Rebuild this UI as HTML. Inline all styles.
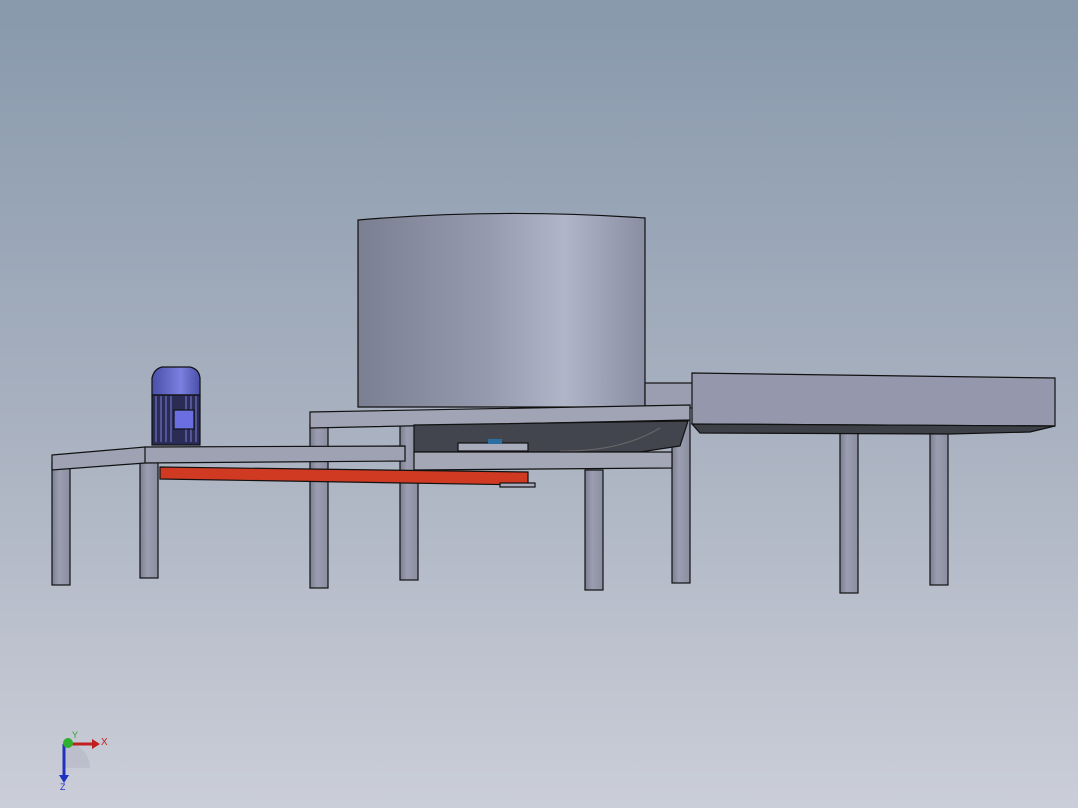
<!DOCTYPE html>
<html><head><style>html,body{margin:0;padding:0;width:1078px;height:808px;overflow:hidden}svg{display:block}</style></head>
<body>
<svg width="1078" height="808" viewBox="0 0 1078 808" xmlns="http://www.w3.org/2000/svg" font-family="Liberation Sans, sans-serif">
<defs>
<linearGradient id="bg" x1="0" y1="0" x2="0" y2="1">
<stop offset="0" stop-color="#8899ac"/><stop offset="0.5" stop-color="#a7b0bf"/><stop offset="1" stop-color="#cbced8"/></linearGradient>
<linearGradient id="cyl" x1="0" y1="0" x2="1" y2="0">
<stop offset="0" stop-color="#7b7f92"/><stop offset="0.45" stop-color="#969aae"/><stop offset="0.72" stop-color="#b0b5c8"/><stop offset="1" stop-color="#8a8ea2"/></linearGradient>
<linearGradient id="mot" x1="0" y1="0" x2="1" y2="0">
<stop offset="0" stop-color="#4a4fa8"/><stop offset="0.6" stop-color="#7a80e0"/><stop offset="1" stop-color="#4a4fa8"/></linearGradient>
<linearGradient id="leg" x1="0" y1="0" x2="1" y2="0">
<stop offset="0" stop-color="#7c8092"/><stop offset="0.4" stop-color="#9a9eb0"/><stop offset="1" stop-color="#8a8ea0"/></linearGradient>
</defs>
<rect width="1078" height="808" fill="url(#bg)"/>
<g stroke="#111" stroke-width="1.2">
<rect x="52" y="462" width="18" height="123" fill="url(#leg)"/>
<rect x="140" y="455" width="18" height="123" fill="url(#leg)"/>
<rect x="310" y="425" width="18" height="163" fill="url(#leg)"/>
<rect x="400" y="420" width="18" height="160" fill="url(#leg)"/>
<rect x="585" y="470" width="18" height="120" fill="url(#leg)"/>
<rect x="672" y="420" width="18" height="163" fill="url(#leg)"/>
<rect x="840" y="430" width="18" height="163" fill="url(#leg)"/>
<rect x="930" y="425" width="18" height="160" fill="url(#leg)"/>
<path d="M358 220 Q500 208 645 218 L645 407 L358 407 Z" fill="url(#cyl)"/>
<rect x="645" y="383" width="48" height="25" fill="#9a9eb0"/>
<path d="M692 373 L1055 378 L1055 426 L692 424 Z" fill="#9598ac"/>
<path d="M692 424 L1055 426 L1030 432 L950 434 L700 433 Z" fill="#3e4048"/>
<path d="M310 412 L690 405 L690 420 L310 428 Z" fill="#a0a4b4"/>
<path d="M414 425 L688 421 L680 446 L640 452 L414 452 Z" fill="#42454e"/>
<path d="M660 428 Q620 452 560 451" fill="none" stroke="#666"/>
<rect x="458" y="443" width="70" height="8" fill="#a8acbc"/>
<rect x="488" y="439" width="14" height="5" fill="#2a6fa0" stroke="none"/>
<path d="M414 452 L672 452 L672 468 L414 470 Z" fill="#a3a7b6"/>
<path d="M160 467 L528 472 L528 485 L160 479 Z" fill="#d03a22"/>
<rect x="500" y="483" width="35" height="4" fill="#a8acbc"/>
<path d="M52 455 L145 447 L405 446 L405 461 L145 463 L52 470 Z" fill="#9ea2b3"/>
<line x1="145" y1="447" x2="145" y2="463"/>
<path d="M152 378 Q154 369 162 367 L190 367 Q199 369 200 378 L200 395 L152 395 Z" fill="url(#mot)"/>
<rect x="152" y="395" width="48" height="50" fill="#2a2c55"/>
<g stroke="#7a7fd8" stroke-width="1">
<line x1="156" y1="396" x2="156" y2="442"/><line x1="161" y1="396" x2="161" y2="442"/><line x1="166" y1="396" x2="166" y2="442"/><line x1="171" y1="396" x2="171" y2="442"/><line x1="186" y1="396" x2="186" y2="442"/><line x1="191" y1="396" x2="191" y2="442"/><line x1="196" y1="396" x2="196" y2="442"/></g>
<rect x="174" y="410" width="20" height="19" fill="#6a6ee0"/>
</g>
<path d="M64 742 A26 26 0 0 1 90 768 L64 768 Z" fill="#b4b8c4" opacity="0.6"/>
<line x1="64" y1="744" x2="92" y2="744" stroke="#c02020" stroke-width="3"/>
<polygon points="92,739 100,744 92,749" fill="#c02020"/>
<line x1="64" y1="744" x2="64" y2="775" stroke="#2030c0" stroke-width="3"/>
<polygon points="59,775 64,783 69,775" fill="#2030c0"/>
<circle cx="68" cy="743" r="5" fill="#30b030"/>
<text x="101" y="745" font-size="10" fill="#c02020">X</text>
<text x="72" y="738" font-size="9" fill="#30a030">Y</text>
<text x="60" y="790" font-size="9" fill="#2030c0">Z</text>
</svg>
</body></html>
